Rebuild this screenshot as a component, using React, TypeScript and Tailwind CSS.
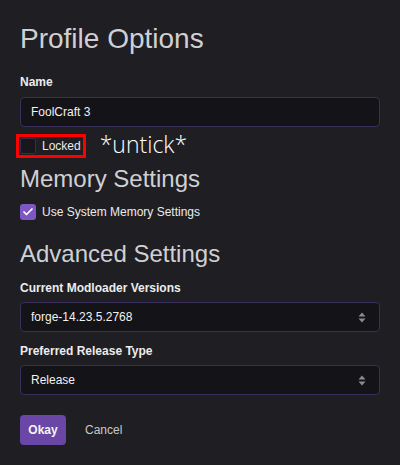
import { Check } from "lucide-react";

const SelectArrows = () => (
  <svg width="8" height="11" viewBox="0 0 8 11" className="shrink-0">
    <path d="M4 0.5 L7.5 4.5 L0.5 4.5 Z" fill="#8b8a90" />
    <path d="M4 10.5 L7.5 6.5 L0.5 6.5 Z" fill="#8b8a90" />
  </svg>
);

const Field = ({ value, select }: { value: string; select?: boolean }) => (
  <div className="flex h-[30px] items-center justify-between rounded-[4px] border border-[#3a2f5c] bg-[#141317] pl-[10px] pr-[13px]">
    <span className="text-[12px] leading-4 text-[#f2f2f2]">{value}</span>
    {select && <SelectArrows />}
  </div>
);

const Label = ({ children, className = "" }: { children: React.ReactNode; className?: string }) => (
  <div className={`text-[12px] font-bold leading-4 text-[#ececec] ${className}`}>{children}</div>
);

export default function App() {
  return (
    <div
      className="h-[465px] w-[400px] bg-[#1f1e23] px-5 pt-[23px]"
      style={{ fontFamily: '"Liberation Sans", Arial, sans-serif' }}
    >
      <h1 className="text-[28px] leading-[32px] text-[#d0d0d4]">Profile Options</h1>

      <Label className="mt-[19px]">Name</Label>
      <div className="mt-[7px]">
        <Field value="FoolCraft 3" />
      </div>

      {/* Locked row with annotation */}
      <div className="mt-[11px] flex items-center">
        <div className="relative flex items-center">
          <span className="h-4 w-4 rounded-[2px] border border-[#352c4f] bg-[#18171c]" />
          <span className="ml-[6px] text-[12px] leading-4 text-[#ececec]">Locked</span>
          <span className="pointer-events-none absolute -bottom-[4px] -left-[4px] -right-[5px] -top-[4px] border-[3px] border-[#ff0000]" />
        </div>
        <span
          className="-mt-[4px] ml-[19px] text-[23px] font-light leading-[20px] text-white"
          style={{ fontFamily: '"Open Sans", Lato, sans-serif' }}
        >
          *untick*
        </span>
      </div>

      <h2 className="mt-[11px] text-[24px] leading-[28px] text-[#d0d0d4]">Memory Settings</h2>

      <div className="mt-[11px] flex items-center">
        <span className="flex h-4 w-4 items-center justify-center rounded-[3px] bg-[#7e57c2]">
          <Check size={12} strokeWidth={3.5} color="#ffffff" />
        </span>
        <span className="ml-[6px] text-[12px] leading-4 text-[#ececec]">Use System Memory Settings</span>
      </div>

      <h2 className="mt-[20px] text-[24px] leading-[28px] text-[#d0d0d4]">Advanced Settings</h2>

      <Label className="mt-[12px]">Current Modloader Versions</Label>
      <div className="mt-[6px]">
        <Field value="forge-14.23.5.2768" select />
      </div>

      <Label className="mt-[11px]">Preferred Release Type</Label>
      <div className="mt-[6px]">
        <Field value="Release" select />
      </div>

      <div className="mt-[20px] flex items-center">
        <button className="flex h-[30px] w-[46px] items-center justify-center rounded-[4px] bg-[#6a46a6] text-[12px] font-bold text-[#f4f4f4]">
          Okay
        </button>
        <button className="ml-[19px] text-[12px] text-[#c8c8cc]">Cancel</button>
      </div>
    </div>
  );
}
